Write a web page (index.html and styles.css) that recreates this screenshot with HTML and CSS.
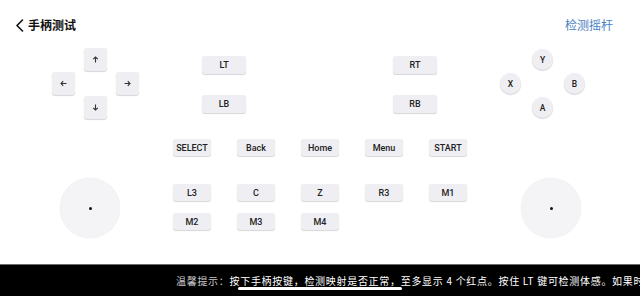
FILE: index.html
```html
<!DOCTYPE html>
<html lang="zh">
<head>
<meta charset="utf-8">
<link rel="stylesheet" href="styles.css">
</head>
<body>
<div class="page">
  <header class="header">
    <div class="back">
      <svg class="chev" width="9" height="13" viewBox="0 0 9 13"><path d="M7.5 1 L2 6.5 L7.5 12" fill="none" stroke="#111" stroke-width="1.6" stroke-linecap="round" stroke-linejoin="round"/></svg>
      <span class="title">手柄测试</span>
    </div>
    <span class="link">检测摇杆</span>
  </header>

  <section class="top">
    <div class="dpad">
      <div class="key up"><svg width="7" height="7" viewBox="0 0 7 7"><path d="M3.5 6.5V1M1.2 3.2L3.5 1 5.8 3.2" fill="none" stroke="#333" stroke-width="1.1"/></svg></div>
      <div class="key left"><svg width="7" height="7" viewBox="0 0 7 7"><path d="M6.5 3.5H1M3.2 1.2L1 3.5 3.2 5.8" fill="none" stroke="#333" stroke-width="1.1"/></svg></div>
      <div class="key right"><svg width="7" height="7" viewBox="0 0 7 7"><path d="M0.5 3.5H6M3.8 1.2L6 3.5 3.8 5.8" fill="none" stroke="#333" stroke-width="1.1"/></svg></div>
      <div class="key down"><svg width="7" height="7" viewBox="0 0 7 7"><path d="M3.5 0.5V6M1.2 3.8L3.5 6 5.8 3.8" fill="none" stroke="#333" stroke-width="1.1"/></svg></div>
    </div>
    <div class="shoulders">
      <div class="btn wide">LT</div>
      <div class="btn wide">LB</div>
    </div>
    <div class="shoulders right-sh">
      <div class="btn wide">RT</div>
      <div class="btn wide">RB</div>
    </div>
    <div class="face">
      <div class="round y">Y</div>
      <div class="round x">X</div>
      <div class="round b">B</div>
      <div class="round a">A</div>
    </div>
  </section>

  <section class="bottom">
    <div class="stick"><span class="dot"></span></div>
    <div class="center">
      <div class="grid sys">
        <div class="btn">SELECT</div>
        <div class="btn">Back</div>
        <div class="btn">Home</div>
        <div class="btn">Menu</div>
        <div class="btn">START</div>
      </div>
      <div class="grid extra">
        <div class="btn">L3</div>
        <div class="btn">C</div>
        <div class="btn">Z</div>
        <div class="btn">R3</div>
        <div class="btn">M1</div>
        <div class="btn">M2</div>
        <div class="btn">M3</div>
        <div class="btn">M4</div>
      </div>
    </div>
    <div class="stick rstick"><span class="dot"></span></div>
  </section>

  <footer class="bar">
    <p class="tip"><span class="label">温馨提示：</span>按下手柄按键，检测映射是否正常，至多显示 4 个红点。按住 LT 键可检测体感。如果时间过长没有反应，请重新连接手柄。</p>
    <span class="indicator"></span>
  </footer>
</div>
</body>
</html>
```

FILE: styles.css
```css
* { box-sizing: border-box; }
html, body { margin: 0; padding: 0; background: #fff; }
body { width: 640px; height: 296px; overflow: hidden; font-family: Roboto, "Liberation Sans", "Noto Sans CJK SC", sans-serif; }

.page { width: 640px; height: 296px; display: flex; flex-direction: column; }

.header { height: 48px; padding: 2px 27px 0 15px; display: flex; align-items: center; justify-content: space-between; }
.back { display: flex; align-items: center; gap: 4px; }
.chev { display: block; }
.title { font-family: "Noto Sans CJK SC", sans-serif; font-size: 12px; font-weight: 700; color: #111; line-height: 14px; }
.link { font-family: "Noto Sans CJK SC", sans-serif; font-size: 12px; color: #4a7fc4; line-height: 14px; }

.btn, .key, .round {
  background: #efeff3;
  color: #222;
  font-weight: 500;
  font-size: 9px;
  display: flex; align-items: center; justify-content: center;
  box-shadow: 0 1px 1px rgba(0,0,0,0.16), 0 0 1px rgba(0,0,0,0.06);
}

.top { height: 72px; padding-left: 52px; display: flex; }
.dpad { display: grid; grid-template-columns: 23px 23px 23px; grid-template-rows: 23px 23px 23px; column-gap: 9px; row-gap: 1px; }
.key { border-radius: 3px; }
.key.up { grid-column: 2; grid-row: 1; }
.key.left { grid-column: 1; grid-row: 2; }
.key.right { grid-column: 3; grid-row: 2; }
.key.down { grid-column: 2; grid-row: 3; }
.key svg { display: block; }

.shoulders { margin-left: 63px; padding-top: 8px; display: flex; flex-direction: column; gap: 21px; }
.right-sh { margin-left: 147px; }
.btn { border-radius: 3px; height: 17px; width: 38px; }
.btn.wide { width: 44px; height: 18px; }

.face { margin-left: 63px; padding-top: 1px; display: grid; grid-template-columns: 21px 21px 21px; grid-template-rows: 21px 21px 21px; column-gap: 11px; row-gap: 3px; }
.round { border-radius: 50%; font-size: 8.5px; }
.round.y { grid-column: 2; grid-row: 1; }
.round.x { grid-column: 1; grid-row: 2; }
.round.b { grid-column: 3; grid-row: 2; }
.round.a { grid-column: 2; grid-row: 3; }

.bottom { margin-top: 19px; padding-left: 60px; display: flex; align-items: flex-start; }
.stick { margin-top: 39px; width: 60px; height: 60px; border-radius: 50%; background: #f4f4f7; box-shadow: 0 0 1px rgba(0,0,0,0.12); display: flex; align-items: center; justify-content: center; }
.dot { width: 3px; height: 3px; border-radius: 50%; background: #111; }
.rstick { margin-left: 54px; }

.center { margin-left: 53px; }
.grid { display: grid; grid-template-columns: repeat(5, 38px); column-gap: 26px; row-gap: 12px; grid-auto-rows: 17px; }
.extra { margin-top: 28px; }

.bar { margin-top: auto; height: 32px; background: #000; border-top: 1px solid #6a6a6a; position: relative; overflow: hidden; }
.tip { margin: 0; padding: 9px 0 0 176px; white-space: nowrap; font-family: "Noto Sans CJK SC", sans-serif; font-size: 10px; letter-spacing: 0.7px; line-height: 13px; color: #fff; }
.label { color: #c8c8c8; }
.indicator { position: absolute; left: 238px; top: 22px; width: 164px; height: 3px; border-radius: 2px; background: #fff; }
```
